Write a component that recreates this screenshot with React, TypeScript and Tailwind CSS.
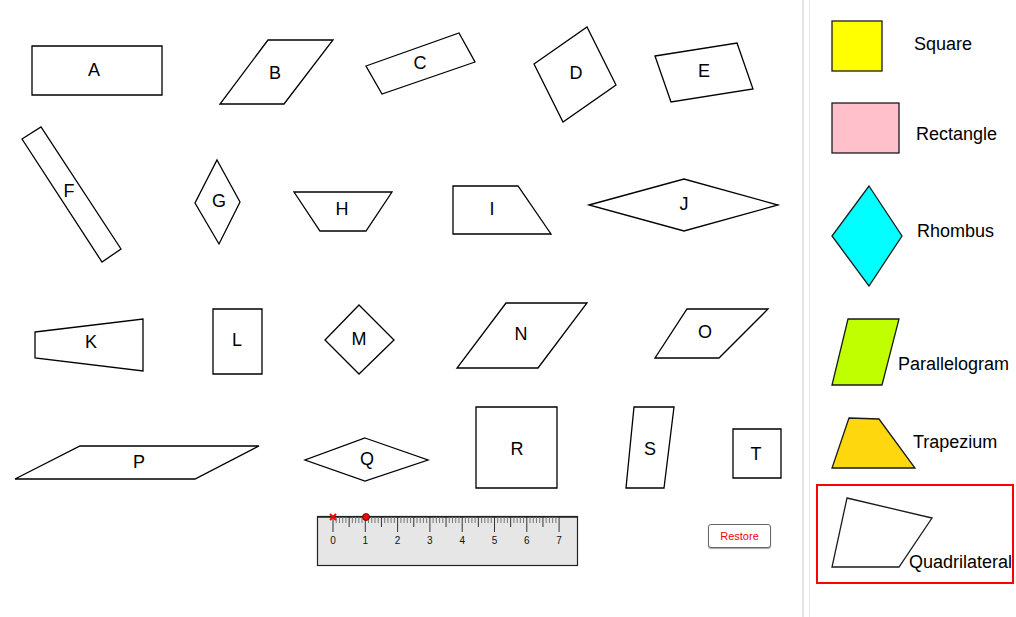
const shapes = [
  { l: "A", pts: "32,46 162,46 162,95 32,95", x: 94, y: 70 },
  { l: "B", pts: "268,40 333,40 284,104 220,104", x: 275, y: 73 },
  { l: "C", pts: "366,66 459,33 475,62 382,94", x: 420, y: 63 },
  { l: "D", pts: "534,64 587,27 616,85 563,122", x: 576, y: 73 },
  { l: "E", pts: "655,56 737,43 753,89 671,102", x: 704, y: 71 },
  { l: "F", pts: "22,139 41,127 121,249 102,262", x: 69, y: 191 },
  { l: "G", pts: "217,160 240,202 219,244 195,203", x: 219, y: 201 },
  { l: "H", pts: "294,192 392,192 366,231 320,231", x: 342, y: 209 },
  { l: "I", pts: "453,186 518,186 551,234 453,234", x: 492, y: 209 },
  { l: "J", pts: "589,205 684,179 778,205 684,231", x: 684, y: 204 },
  { l: "K", pts: "35,332 143,319 143,371 35,358", x: 91, y: 342 },
  { l: "L", pts: "213,309 262,309 262,374 213,374", x: 237, y: 340 },
  { l: "M", pts: "359,305 394,340 359,374 325,340", x: 359, y: 339 },
  { l: "N", pts: "506,303 587,303 538,368 457,368", x: 521, y: 334 },
  { l: "O", pts: "687,309 768,309 719,358 655,358", x: 705, y: 332 },
  { l: "P", pts: "80,446 259,446 195,479 15,479", x: 139, y: 462 },
  { l: "Q", pts: "365,438 428,460 365,481 305,460", x: 367, y: 459 },
  { l: "R", pts: "476,407 557,407 557,488 476,488", x: 517, y: 449 },
  { l: "S", pts: "634,407 674,407 664,488 626,488", x: 650, y: 449 },
  { l: "T", pts: "733,429 781,429 781,478 733,478", x: 756, y: 454 },
];

function Ruler() {
  const x0 = 333;
  const step = 3.23;
  const ticks = [];
  for (let i = 0; i <= 70; i++) {
    const x = x0 + i * step;
    const major = i % 10 === 0;
    const half = i % 5 === 0;
    ticks.push(
      <line
        key={i}
        x1={x}
        x2={x}
        y1={517}
        y2={major ? 532 : half ? 527 : 523}
        stroke={major || half ? "#333" : "#777"}
        strokeWidth={1}
      />
    );
  }
  return (
    <g>
      <rect x={317.5} y={516.5} width={260} height={49} fill="#e6e6e6" stroke="#222" strokeWidth={1.2} />
      <line x1={317} x2={578} y1={517} y2={517} stroke="#222" strokeWidth={1.6} />
      {ticks}
      {[0, 1, 2, 3, 4, 5, 6, 7].map((n) => (
        <text key={n} x={x0 + n * 32.3} y={540} fontSize={10} textAnchor="middle" dominantBaseline="central" fill="#111">
          {n}
        </text>
      ))}
      <line x1={330} x2={336} y1={514} y2={520} stroke="#ff0000" strokeWidth={2} />
      <line x1={336} x2={330} y1={514} y2={520} stroke="#ff0000" strokeWidth={2} />
      <circle cx={366} cy={517} r={3.5} fill="#ff0000" stroke="#400" strokeWidth={0.8} />
    </g>
  );
}

function Label({ children, className = "" }: { children: string; className?: string }) {
  return <span className={`text-[18px] leading-[21px] text-black ${className}`}>{children}</span>;
}

export default function App() {
  return (
    <div className="flex h-[617px] w-[1016px] overflow-hidden bg-white font-['Liberation_Sans',Arial,sans-serif]">
      {/* drawing canvas */}
      <div className="relative h-full w-[802px]">
        <svg width={802} height={617} className="block">
          {shapes.map((s) => (
            <g key={s.l}>
              <polygon points={s.pts} fill="white" stroke="#000" strokeWidth={1.3} strokeLinejoin="miter" />
              <text x={s.x} y={s.y} fontSize={18} textAnchor="middle" dominantBaseline="central" fill="#000">
                {s.l}
              </text>
            </g>
          ))}
          <Ruler />
        </svg>
        <button className="absolute left-[708px] top-[524px] h-[24px] w-[63px] rounded-[3px] border border-[#666] bg-white text-[11px] leading-none text-[#ff0000] shadow-[0_1px_1px_rgba(0,0,0,0.35)]">
          Restore
        </button>
      </div>

      {/* divider */}
      <div className="h-full w-[8px] border-l-2 border-r border-[#e4e4e4]" />

      {/* legend */}
      <div className="flex h-full w-[206px] flex-col pl-[21px]">
        <div className="mt-[20px] flex items-center">
          <svg width={53} height={52}>
            <rect x={1} y={1} width={50} height={50} fill="#ffff00" stroke="#1a1a1a" strokeWidth={1.3} />
          </svg>
          <Label className="-mt-[4px] ml-[30px]">Square</Label>
        </div>

        <div className="mt-[30px] flex items-center">
          <svg width={70} height={52}>
            <rect x={1} y={1} width={67} height={50} fill="#ffc0cb" stroke="#1a1a1a" strokeWidth={1.3} />
          </svg>
          <Label className="mt-[13px] ml-[15px]">Rectangle</Label>
        </div>

        <div className="mt-[31px] flex items-center">
          <svg width={72} height={102}>
            <polygon points="38,1 71,51 38,101 1,51" fill="#00ffff" stroke="#1a1a1a" strokeWidth={1.3} />
          </svg>
          <Label className="-mt-[10px] ml-[14px]">Rhombus</Label>
        </div>

        <div className="mt-[31px] flex items-center">
          <svg width={70} height={68}>
            <polygon points="17,1 68,1 51,67 1,67" fill="#c0ff00" stroke="#1a1a1a" strokeWidth={1.3} />
          </svg>
          <Label className="mt-[25px] -ml-[3px]">Parallelogram</Label>
        </div>

        <div className="mt-[31px] flex items-center">
          <svg width={86} height={52}>
            <polygon points="18,1 48,2 84,51 1,51" fill="#ffd70f" stroke="#1a1a1a" strokeWidth={1.3} />
          </svg>
          <Label className="-mt-[2px] -ml-[4px]">Trapezium</Label>
        </div>

        <div className="-ml-[15px] mt-[15px] flex h-[100px] w-[198px] items-start border-2 border-[#ff0000] pl-[13px] pt-[11px]">
          <svg width={103} height={71}>
            <polygon points="16,1 101,21 68,70 1,70" fill="white" stroke="#1a1a1a" strokeWidth={1.3} />
          </svg>
          <Label className="-ml-[25px] mt-[55px] whitespace-nowrap">Quadrilateral</Label>
        </div>
      </div>
    </div>
  );
}
